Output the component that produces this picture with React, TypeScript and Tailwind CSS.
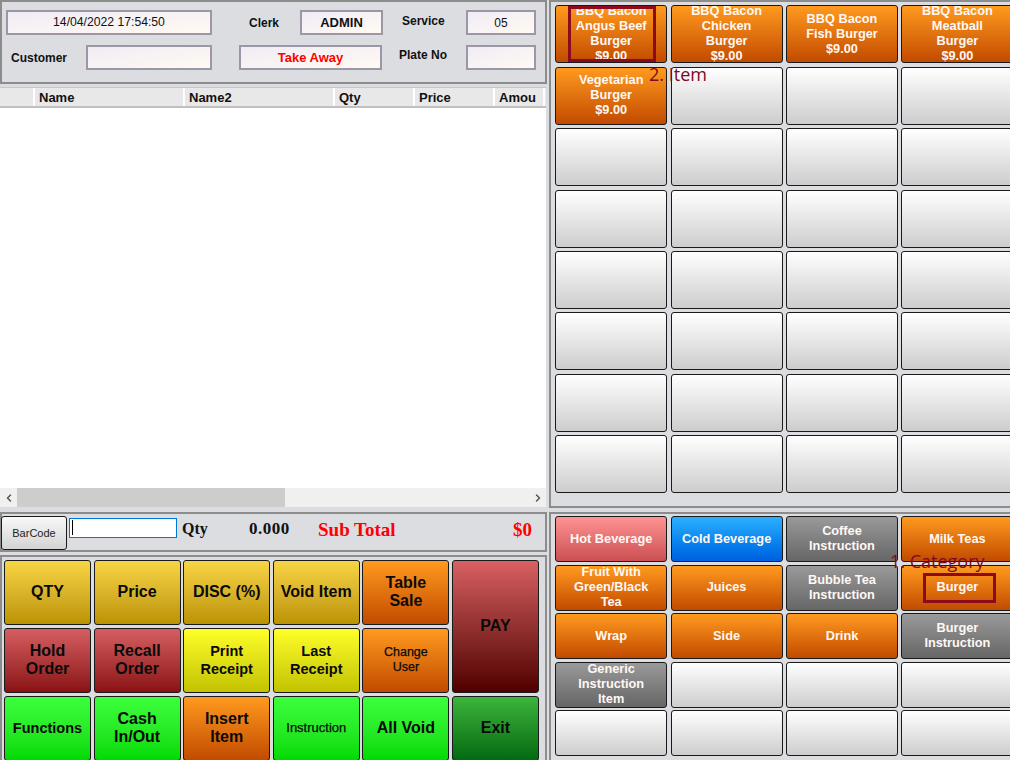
import { ChevronLeft, ChevronRight } from "lucide-react";

type Tile = { label?: string; cls: string };

const orange = "bg-gradient-to-b from-[#ff9a1f] to-[#c24a00]";
const blank = "bg-gradient-to-b from-[#ffffff] to-[#cdcdcd]";
const grey = "bg-gradient-to-b from-[#9a9a9a] to-[#666666]";
const gold = "bg-gradient-to-b from-[#f9d544] to-[#bb9300]";
const red = "bg-gradient-to-b from-[#d65e61] to-[#8a1014]";
const yellow = "bg-gradient-to-b from-[#ffff28] to-[#c2c200]";
const green = "bg-gradient-to-b from-[#3cff3c] to-[#00da00]";

const items: string[] = [
  "BBQ Bacon\nAngus Beef\nBurger\n$9.00",
  "BBQ Bacon\nChicken\nBurger\n$9.00",
  "BBQ Bacon\nFish Burger\n$9.00",
  "BBQ Bacon\nMeatball\nBurger\n$9.00",
  "Vegetarian\nBurger\n$9.00",
];

const categories: Tile[] = [
  { label: "Hot Beverage", cls: "bg-gradient-to-b from-[#ff9393] to-[#cb4f53]" },
  { label: "Cold Beverage", cls: "bg-gradient-to-b from-[#2bb0ff] to-[#005fe0]" },
  { label: "Coffee\nInstruction", cls: grey },
  { label: "Milk Teas", cls: orange },
  { label: "Fruit With\nGreen/Black\nTea", cls: orange },
  { label: "Juices", cls: orange },
  { label: "Bubble Tea\nInstruction", cls: grey },
  { label: "Burger", cls: orange },
  { label: "Wrap", cls: orange },
  { label: "Side", cls: orange },
  { label: "Drink", cls: orange },
  { label: "Burger\nInstruction", cls: grey },
  { label: "Generic\nInstruction\nItem", cls: grey },
];

const columns = [
  { name: "", width: "w-[35px]" },
  { name: "Name", width: "w-[150px]" },
  { name: "Name2", width: "w-[150px]" },
  { name: "Qty", width: "w-[80px]" },
  { name: "Price", width: "w-[80px]" },
  { name: "Amou", width: "w-[50px]" },
];

function Field({ className, children }: { className: string; children?: React.ReactNode }) {
  return (
    <div
      className={`h-[25px] flex items-center justify-center border-2 border-[#9b97a6] bg-gradient-to-br from-[#f1ecf5] to-[#fffaf2] ${className}`}
    >
      {children}
    </div>
  );
}

function SaleButton({ label, cls, size, extra }: { label: string; cls: string; size: string; extra?: string }) {
  return (
    <button
      className={`flex items-center justify-center whitespace-pre-line border border-[#1a1a1a] rounded-[3px] pb-[2px] font-bold text-[#0a0a0a] leading-[18px] ${size} ${cls} ${extra ?? ""}`}
    >
      {label}
    </button>
  );
}

function MenuTile({ label, cls }: { label?: string; cls: string }) {
  return (
    <button
      className={`flex items-center justify-center overflow-hidden whitespace-pre-line border border-[#1a1a1a] rounded-[3px] pb-[2px] text-[12.75px] font-bold leading-[15px] text-[#fff8f4] ${cls}`}
    >
      {label}
    </button>
  );
}

export default function App() {
  const itemTiles = Array.from({ length: 32 }, (_, i) => items[i]);
  const categoryTiles = Array.from({ length: 20 }, (_, i) => categories[i]);

  return (
    <div className="relative flex w-[1010px] h-[760px] overflow-hidden bg-[#dcdde1] font-['Liberation_Sans',Arial,sans-serif] text-[13px]">
      {/* left side: order */}
      <div className="flex flex-col w-[549px] shrink-0">
        <div className="h-[84px] w-[547px] shrink-0 border-2 border-[#8c8c8c] pt-[8px] pl-[4px] text-[12px] font-bold text-[#111]">
          <div className="flex items-center">
            <Field className="w-[206px] font-normal text-[12.2px]">14/04/2022 17:54:50</Field>
            <span className="ml-[37px] w-[51px]">Clerk</span>
            <Field className="w-[83px] text-[13px]">ADMIN</Field>
            <span className="ml-[19px] w-[64px] -mt-[3px]">Service</span>
            <Field className="w-[70px] font-normal">05</Field>
          </div>
          <div className="flex items-center mt-[10px]">
            <span className="ml-[5px] w-[75px]">Customer</span>
            <Field className="w-[126px]" />
            <Field className="ml-[27px] w-[143px] text-[13px] text-[#ff0000]">
              <span className="font-bold">Take Away</span>
            </Field>
            <span className="ml-[17px] w-[67px] -mt-[5px]">Plate No</span>
            <Field className="w-[70px]" />
          </div>
        </div>

        <div className="mt-[3px] w-[546px] h-[420px] shrink-0 flex flex-col bg-white border-t border-[#c8c8c8]">
          <div className="flex h-[20px] bg-[#e8e8e8] border-b-2 border-[#c0c0c0] text-[13px] font-bold text-[#111]">
            {columns.map((c) => (
              <div key={c.name} className={`${c.width} pl-[4px] border-r-2 border-white leading-[20px]`}>
                {c.name}
              </div>
            ))}
          </div>
          <div className="flex-1" />
          <div className="flex items-center justify-between h-[19px] bg-[#f0f0f0] text-[#555]">
            <div className="flex items-center h-full">
              <div className="flex justify-center w-[17px]">
                <ChevronLeft size={12} strokeWidth={3} />
              </div>
              <div className="w-[268px] h-full bg-[#cdcdcd]" />
            </div>
            <div className="flex justify-center w-[17px]">
              <ChevronRight size={12} strokeWidth={3} />
            </div>
          </div>
        </div>

        <div className="mt-[5px] flex w-[547px] h-[40px] shrink-0 border-2 border-[#8c8c8c] items-start">
          <button className="mt-[2px] ml-[-1px] w-[66px] h-[34px] shrink-0 rounded-[3px] border border-[#1a1a1a] bg-gradient-to-b from-[#f8f8f8] to-[#d4d4d4] text-[11px] text-[#222]">
            BarCode
          </button>
          <div className="ml-[2px] mt-[4px] h-[20px] w-[108px] border border-[#0078d7] bg-white pl-[2px] pt-[1px]">
            <div className="w-px h-[15px] bg-black" />
          </div>
          <div className="ml-[5px] mt-[5px] w-[67px] font-['Liberation_Serif',serif] text-[16px] leading-[20px] font-bold text-[#111]">
            Qty
          </div>
          <div className="w-[69px] mt-[5px] font-['Liberation_Serif',serif] text-[17px] leading-[20px] tracking-[0.5px] font-bold text-[#111]">
            0.000
          </div>
          <div className="mt-[5px] font-['Liberation_Serif',serif] text-[19px] leading-[22px] font-bold text-[#ff0000]">
            Sub Total
          </div>
          <div className="ml-auto mr-[13px] mt-[5px] font-['Liberation_Serif',serif] text-[19px] leading-[22px] font-bold text-[#ff0000]">
            $0
          </div>
        </div>

        <div className="mt-[3px] w-[547px] flex-1 min-h-0 border-2 border-b-0 border-[#8c8c8c] pl-[2px] pt-[3px] grid grid-cols-[repeat(6,87px)] grid-rows-[65px_65px_65px] gap-x-[2.6px] gap-y-[3px]">
          <SaleButton label="QTY" cls={gold} size="text-[16px]" />
          <SaleButton label="Price" cls={gold} size="text-[16px]" />
          <SaleButton label="DISC (%)" cls={gold} size="text-[16px]" />
          <SaleButton label="Void Item" cls={gold} size="text-[16px]" />
          <SaleButton label={"Table\nSale"} cls={orange} size="text-[16px]" />
          <SaleButton
            label="PAY"
            cls="bg-gradient-to-b from-[#d96063] to-[#500000]"
            size="text-[16px]"
            extra="row-span-2"
          />
          <SaleButton label={"Hold\nOrder"} cls={red} size="text-[16px]" />
          <SaleButton label={"Recall\nOrder"} cls={red} size="text-[16px]" />
          <SaleButton label={"Print\nReceipt"} cls={yellow} size="text-[14.5px]" />
          <SaleButton label={"Last\nReceipt"} cls={yellow} size="text-[14.5px]" />
          <SaleButton
            label={"Change\nUser"}
            cls={orange}
            size="text-[12.5px] !font-normal !leading-[15px] [-webkit-text-stroke:0.25px_#0a0a0a]"
          />
          <SaleButton label="Functions" cls={green} size="text-[14.5px]" />
          <SaleButton label={"Cash\nIn/Out"} cls={green} size="text-[16px]" />
          <SaleButton label={"Insert\nItem"} cls={orange} size="text-[16px]" />
          <SaleButton
            label="Instruction"
            cls={green}
            size="text-[13px] !font-normal [-webkit-text-stroke:0.25px_#0a0a0a]"
          />
          <SaleButton label="All Void" cls={green} size="text-[16px]" />
          <SaleButton label="Exit" cls="bg-gradient-to-b from-[#3cb53c] to-[#006a10]" size="text-[16px]" />
        </div>
      </div>

      {/* right side: menu */}
      <div className="flex flex-col w-[470px] shrink-0">
        <div className="h-[508px] shrink-0 border-2 border-r-0 border-[#8c8c8c] pl-[4.2px] pt-[3.3px] grid grid-cols-[repeat(4,112px)] grid-rows-[repeat(8,58px)] gap-x-[3.4px] gap-y-[3.45px]">
          {itemTiles.map((label, i) => (
            <MenuTile key={i} label={label} cls={label ? orange : blank} />
          ))}
        </div>
        <div className="mt-[4px] flex-1 min-h-0 border-2 border-b-0 border-r-0 border-[#8c8c8c] pl-[4.2px] pt-[2px] grid grid-cols-[repeat(4,112px)] grid-rows-[repeat(5,46px)] gap-x-[3.4px] gap-y-[2.5px]">
          {categoryTiles.map((tile, i) => (
            <MenuTile key={i} label={tile?.label} cls={tile?.cls ?? blank} />
          ))}
        </div>
      </div>

      {/* tutorial annotations */}
      <div className="absolute left-[568px] top-[6px] w-[88px] h-[56px] border-[3px] border-[#8b0a1e]" />
      <div className="absolute left-[649px] top-[62px] font-['Open_Sans',sans-serif] text-[18px] leading-[24px] text-[#7d0a20]">
        2. Item
      </div>
      <div className="absolute left-[923px] top-[573px] w-[73px] h-[30px] border-[3px] border-[#8b0a1e]" />
      <div className="absolute left-[890px] top-[549px] font-['Open_Sans',sans-serif] text-[18px] leading-[24px] text-[#7d0a20]">
        1. Category
      </div>
    </div>
  );
}
